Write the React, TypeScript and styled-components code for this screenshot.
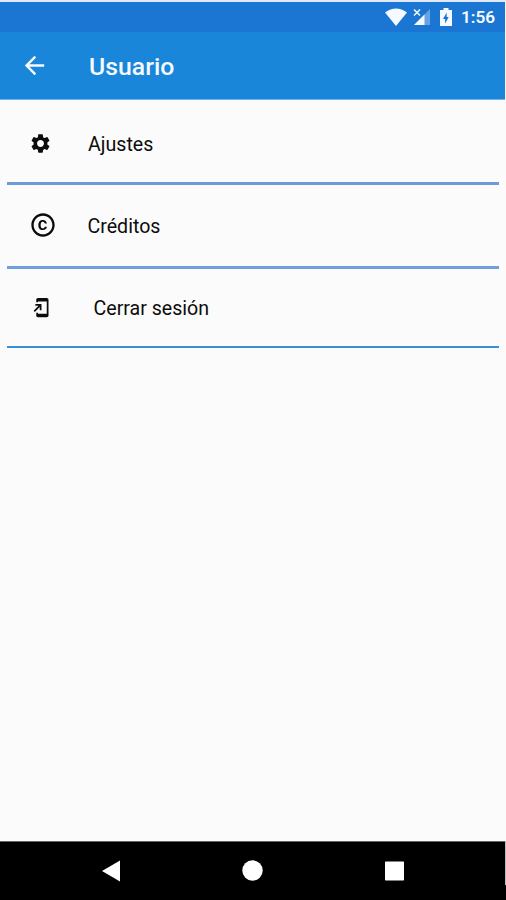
import React from "react";
import styled, { createGlobalStyle } from "styled-components";
import { MdSettings, MdCopyright, MdAddToHomeScreen, MdArrowBack } from "react-icons/md";

const GlobalStyle = createGlobalStyle`
  body { margin: 0; background: #fafafa; font-family: Roboto, "Noto Sans", sans-serif; }
  * { box-sizing: border-box; }
  svg { display: block; flex: none; }
`;

const Screen = styled.div`
  width: 506px;
  height: 900px;
  display: flex;
  flex-direction: column;
  background: #fbfbfb;
  border-top: 2px solid #dfe9f8;
  overflow: hidden;
`;

const StatusBar = styled.div`
  height: 30px;
  margin-right: 1px;
  padding: 0 10px 0 0;
  display: flex;
  justify-content: flex-end;
  align-items: center;
  background: #1a76d2;
  color: #f4faff;
`;

const Clock = styled.span`
  width: 34px;
  font-size: 17.2px;
  font-weight: 600;
  line-height: 31px;
  white-space: nowrap;
`;

const StatusIcons = styled.div`
  display: flex;
  align-items: center;
  margin-right: 8px;
`;

const AppBar = styled.header`
  height: 68px;
  margin-right: 1px;
  padding-left: 20px;
  display: flex;
  align-items: center;
  background: #1986da;
  border-bottom: 1px solid #70b4e8;
  color: #f4faff;
`;

const Title = styled.h1`
  margin: 3px 0 0 40px;
  font-size: 24.8px;
  font-weight: 500;
  line-height: 30px;
`;

const List = styled.main`
  flex: 1;
  padding: 0 7px;
`;

const Row = styled.div<{ $height: number; $line: string; $thick: number }>`
  height: ${(p) => p.$height}px;
  display: flex;
  align-items: flex-start;
  color: #0c0c0c;
  border-bottom: ${(p) => p.$thick}px solid ${(p) => p.$line};
`;

const IconSlot = styled.div<{ $left: number; $top: number; $width: number }>`
  width: ${(p) => p.$width}px;
  padding: ${(p) => p.$top}px 0 0 ${(p) => p.$left}px;
`;

const Label = styled.span<{ $top: number }>`
  margin-top: ${(p) => p.$top}px;
  font-size: 19.6px;
  line-height: 24px;
  white-space: nowrap;
`;

const NavBar = styled.nav`
  height: 59px;
  padding: 0 100.6px 1px 102px;
  display: flex;
  justify-content: space-between;
  align-items: center;
  background: #000;
  border-top: 1px solid #666;
`;

const EdgeRow = styled.div`
  display: flex;
  background: linear-gradient(#bbb 0 44px, #000 44px);
`;

const NavFill = styled.div`
  width: 505px;
`;

export default function App() {
  return (
    <>
      <GlobalStyle />
      <Screen>
        <StatusBar>
          <StatusIcons>
            <svg width="68" height="20" viewBox="0 0 68 20" fill="currentColor">
              <path d="M0 5.5Q11 -2.5 22 5.5L11 19Z" />
              <path d="M45 2V18H29Z" opacity=".35" />
              <path d="M39.500 7.500V18H29Z" />
              <path d="M29 2.500L35 8.500M35 2.500L29 8.500" stroke="currentColor" strokeWidth="1.500" />
              <path fillRule="evenodd" d="M58.500 1h5v2h3.500v16h-12V3h3.500ZM61.700 5.500L58 12h2.100v4.500L63.700 10h-2Z" />
            </svg>
          </StatusIcons>
          <Clock>1:56</Clock>
        </StatusBar>
        <AppBar>
          <MdArrowBack size={29} />
          <Title>Usuario</Title>
        </AppBar>
        <List>
          <Row $height={85} $line="#6b9bd8" $thick={3}>
            <IconSlot $left={22.4} $top={32} $width={81}><MdSettings size={23} /></IconSlot>
            <Label $top={33}>Ajustes</Label>
          </Row>
          <Row $height={84} $line="#729fdc" $thick={3}>
            <IconSlot $left={21.5} $top={26.4} $width={80.5}><MdCopyright size={28} /></IconSlot>
            <Label $top={30}>Créditos</Label>
          </Row>
          <Row $height={79} $line="#3b8dd4" $thick={2}>
            <IconSlot $left={24} $top={28} $width={86.5}><MdAddToHomeScreen size={21} /></IconSlot>
            <Label $top={28}>Cerrar sesión</Label>
          </Row>
        </List>
        <EdgeRow>
          <NavFill>
            <NavBar>
              <svg width="18" height="22" viewBox="0 0 18 22"><path d="M18 .5V21.500L0 11Z" fill="#fff" /></svg>
              <svg width="21" height="21" viewBox="0 0 21 21"><circle cx="10.500" cy="10.500" r="10.200" fill="#fff" /></svg>
              <svg width="19" height="20" viewBox="0 0 19 20"><rect y=".5" width="19" height="19" rx=".7" fill="#fff" /></svg>
            </NavBar>
          </NavFill>
        </EdgeRow>
      </Screen>
    </>
  );
}
